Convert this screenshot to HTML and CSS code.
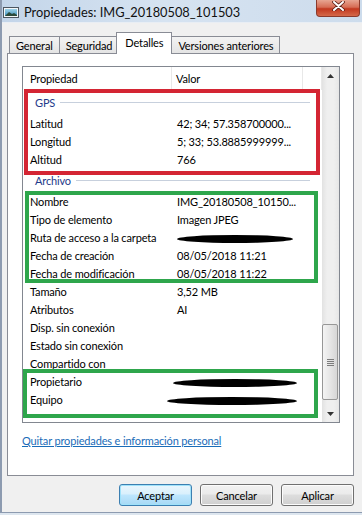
FILE: index.html
```html
<!DOCTYPE html>
<html lang="es">
<head>
  <meta charset="UTF-8" />
  <meta name="viewport" content="width=device-width, initial-scale=1.0">
  <title>Propiedades: IMG_20180508_101503</title>
  <link rel="stylesheet" href="styles.css">
</head>
<body>

  <div class="window">
    <div class="titlebar">
      <svg class="title-icon" width="16" height="11" viewBox="0 0 16 11">
        <defs>
          <linearGradient id="sky" x1="0" y1="0" x2="0" y2="1">
            <stop offset="0" stop-color="#9fd3ea" />
            <stop offset="1" stop-color="#3f8fb8" />
          </linearGradient>
        </defs>
        <rect x="0.5" y="0.5" width="15" height="10" fill="#f4f6f8" stroke="#4d5660" />
        <rect x="2" y="2" width="12" height="7" fill="url(#sky)" />
        <path d="M2 9 L6 5 L9 7 L11 6 L14 8 L14 9 Z" fill="#2c4a3a" />
      </svg>
      <span class="title">Propiedades: IMG_20180508_101503</span>
      <div class="close">
        <svg width="13" height="10" viewBox="0 0 13 10">
          <path d="M2 1 L11 9 M11 1 L2 9" stroke="#5a1d14" stroke-width="3.6" stroke-linecap="round" />
          <path d="M2 1 L11 9 M11 1 L2 9" stroke="#fff" stroke-width="2" stroke-linecap="round" />
        </svg>
      </div>
    </div>

    <div class="content">
      <div class="tabs">
        <div class="tab">General</div>
        <div class="tab">Seguridad</div>
        <div class="tab active">Detalles</div>
        <div class="tab">Versiones anteriores</div>
      </div>

      <div class="panel">
        <div class="listview">
          <div class="list-main">
            <div class="list-header">
              <div class="col-prop">Propiedad</div>
              <div class="col-val">Valor</div>
              <div class="col-rest"></div>
            </div>

            <div class="list-rows">
              <div class="group">GPS</div>
              <div class="row"><div class="prop">Latitud</div><div class="val">42; 34; 57.358700000...</div></div>
              <div class="row"><div class="prop">Longitud</div><div class="val">5; 33; 53.8885999999...</div></div>
              <div class="row"><div class="prop">Altitud</div><div class="val">766</div></div>

              <div class="group">Archivo</div>
              <div class="row"><div class="prop">Nombre</div><div class="val">IMG_20180508_10150...</div></div>
              <div class="row"><div class="prop">Tipo de elemento</div><div class="val">Imagen JPEG</div></div>
              <div class="row"><div class="prop">Ruta de acceso a la carpeta</div><div class="val"><span class="redact redact-path"></span></div></div>
              <div class="row"><div class="prop">Fecha de creación</div><div class="val">08/05/2018 11:21</div></div>
              <div class="row"><div class="prop">Fecha de modificación</div><div class="val">08/05/2018 11:22</div></div>
              <div class="row"><div class="prop">Tamaño</div><div class="val">3,52 MB</div></div>
              <div class="row"><div class="prop">Atributos</div><div class="val">AI</div></div>
              <div class="row"><div class="prop">Disp. sin conexión</div><div class="val"></div></div>
              <div class="row"><div class="prop">Estado sin conexión</div><div class="val"></div></div>
              <div class="row"><div class="prop">Compartido con</div><div class="val"></div></div>
              <div class="row"><div class="prop">Propietario</div><div class="val"><span class="redact redact-owner"></span></div></div>
              <div class="row"><div class="prop">Equipo</div><div class="val"><span class="redact redact-pc"></span></div></div>
              <div class="row"><div class="prop">&nbsp;</div><div class="val"></div></div>

              <!-- annotation frames drawn over the list -->
              <div class="mark mark-red"></div>
              <div class="mark mark-green mark-file"></div>
              <div class="mark mark-green mark-owner"></div>
            </div>
          </div>

          <div class="scrollbar">
            <div class="scroll-btn">
              <svg width="7" height="4" viewBox="0 0 7 4"><path d="M0 4 L3.5 0 L7 4 Z" fill="#333" /></svg>
            </div>
            <div class="scroll-track">
              <div class="thumb"><div class="grip"></div></div>
            </div>
            <div class="scroll-btn">
              <svg width="7" height="4" viewBox="0 0 7 4"><path d="M0 0 L3.5 4 L7 0 Z" fill="#333" /></svg>
            </div>
          </div>
        </div>

        <a class="remove-link" href="#">Quitar propiedades e información personal</a>
      </div>

      <div class="buttons">
        <button class="btn default">Aceptar</button>
        <button class="btn">Cancelar</button>
        <button class="btn">Aplicar</button>
      </div>
    </div>
  </div>

</body>
</html>
```

FILE: styles.css
```css
* {
  box-sizing: border-box;
}

html, body {
  margin: 0;
  padding: 0;
}

body {
  width: 362px;
  height: 515px;
  overflow: hidden;
  font-family: Lato, 'Liberation Sans', sans-serif;
  font-size: 11px;
  letter-spacing: -0.15px;
  color: #000;
  background: #dde6ef;
}

.window {
  height: 513px;
  background: #f0f0f0;
  border-left: 2px solid #8d9bb0;
  border-bottom: 1px solid #8d9bb0;
}

.titlebar {
  height: 23px;
  display: flex;
  align-items: flex-start;
  background: linear-gradient(to right, #c3d5e9, #d6e3f1 45%, #cddcec);
  border-bottom: 1px solid #e9eef4;
}

.title-icon {
  margin: 7px 0 0 1px;
}

.title {
  margin: 4px 0 0 5px;
  font-size: 12.8px;
  letter-spacing: 0;
  color: #111;
}

.close {
  margin-left: auto;
  margin-right: 2px;
  width: 44px;
  height: 17px;
  display: flex;
  justify-content: center;
  padding-top: 1px;
  border: 1px solid #8b3a2c;
  border-top: none;
  border-radius: 0 0 4px 4px;
  background: linear-gradient(#e7a592, #d66d55 45%, #c2381f 55%, #d4694a);
}

.content {
  padding: 9px 8px 0 5px;
}

.tabs {
  height: 21px;
  display: flex;
  align-items: flex-end;
  padding-left: 2px;
  position: relative;
  z-index: 1;
}

.tab {
  height: 17px;
  padding: 0 6px;
  display: flex;
  align-items: center;
  border: 1px solid #898c95;
  border-bottom: none;
  margin-right: -1px;
  background: linear-gradient(#f3f3f3, #e4e4e4);
}

.tab.active {
  height: 22px;
  margin: 0 -1px -1px -2px;
  padding: 0 8px 2px;
  background: #fff;
  position: relative;
}

.panel {
  height: 423px;
  border: 1px solid #898c95;
  background: #fff;
  padding: 12px 13px 0 14px;
}

.listview {
  width: 318px;
  height: 357px;
  border: 1px solid #828790;
  display: flex;
}

.list-main {
  flex: 1;
  overflow: hidden;
}

.list-header {
  height: 23px;
  display: flex;
}

.list-header div {
  display: flex;
  align-items: center;
  border-right: 1px solid #e8e8e8;
}

.col-prop {
  width: 149px;
  padding-left: 7px;
}

.col-val {
  width: 131px;
  padding-left: 4px;
}

.col-rest {
  flex: 1;
}

.list-rows {
  position: relative;
}

.group {
  height: 24px;
  display: flex;
  align-items: center;
  padding: 0 12px 0 12px;
  color: #1e3a8a;
}

.group::after {
  content: '';
  flex: 1;
  height: 1px;
  margin-left: 5px;
  background: #c7d0dd;
}

.row {
  height: 18px;
  display: flex;
  align-items: center;
  white-space: nowrap;
}

.prop {
  width: 149px;
  padding-left: 7px;
}

.val {
  padding-left: 5px;
}

.redact {
  display: inline-block;
  height: 8px;
  background: #000;
  border-radius: 50%;
  vertical-align: middle;
}

.redact-path {
  width: 116px;
}

.redact-owner {
  width: 124px;
  margin-left: -4px;
}

.redact-pc {
  width: 130px;
  margin-left: -10px;
}

.mark {
  position: absolute;
  border: 4px solid;
}

.mark-red {
  border-color: #d42533;
  left: 1px;
  top: -1px;
  width: 296px;
  height: 86px;
}

.mark-green {
  border-color: #2ea64c;
}

.mark-file {
  left: 2px;
  top: 101px;
  width: 293px;
  height: 92px;
}

.mark-owner {
  left: 0;
  top: 279px;
  width: 295px;
  height: 49px;
}

.scrollbar {
  width: 17px;
  display: flex;
  flex-direction: column;
  background: linear-gradient(to right, #e2e2e2, #efefef 30%, #efefef 70%, #e6e6e6);
}

.scroll-btn {
  height: 17px;
  display: flex;
  align-items: center;
  justify-content: center;
}

.scroll-track {
  flex: 1;
}

.thumb {
  margin: 240px 0 0 0;
  width: 16px;
  height: 76px;
  border: 1px solid #979797;
  border-radius: 2px;
  background: linear-gradient(to right, #f4f4f4, #e6e6e6 50%, #d6d6d6);
  display: flex;
  align-items: center;
  justify-content: center;
}

.grip {
  width: 7px;
  height: 7px;
  background: repeating-linear-gradient(#7c7c7c 0 1px, transparent 1px 2px);
}

.remove-link {
  display: inline-block;
  margin-top: 11px;
  color: #1a6cb8;
  text-decoration: underline;
}

.buttons {
  margin-top: 8px;
  display: flex;
  justify-content: flex-end;
  gap: 8px;
}

.btn {
  width: 73px;
  height: 22px;
  font-family: inherit;
  font-size: 11px;
  letter-spacing: -0.15px;
  color: #000;
  border: 1px solid #707070;
  border-radius: 3px;
  background: linear-gradient(#f2f2f2, #ebebeb 45%, #dddddd 50%, #cfcfcf);
  box-shadow: inset 0 0 0 1px #fcfcfc;
  padding: 0;
}

.btn.default {
  border-color: #3c7fb1;
  background: linear-gradient(#eaf6fd, #d9f0fc 45%, #bee6fd 50%, #a7d9f5);
  box-shadow: inset 0 0 0 1px #9fe2fa;
}
```
